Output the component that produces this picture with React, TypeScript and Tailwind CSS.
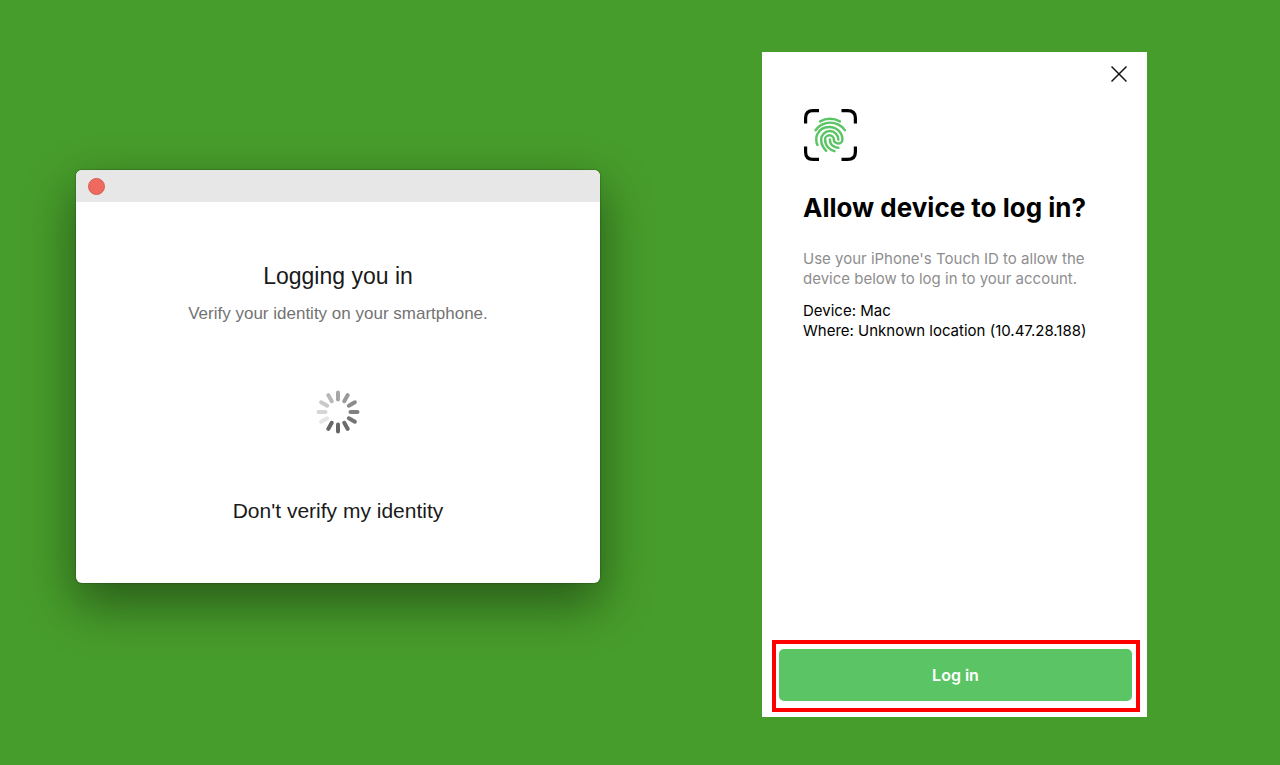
const spokes: { angle: number; color: string }[] = [
  { angle: 0, color: "#a6a6a6" },
  { angle: 30, color: "#999999" },
  { angle: 60, color: "#8c8c8c" },
  { angle: 90, color: "#808080" },
  { angle: 120, color: "#737373" },
  { angle: 150, color: "#6b6b6b" },
  { angle: 180, color: "#666666" },
  { angle: 210, color: "#666666" },
  { angle: 240, color: "#e6e6e6" },
  { angle: 270, color: "#d6d6d6" },
  { angle: 300, color: "#c9c9c9" },
  { angle: 330, color: "#b8b8b8" },
];

const Spinner = () => (
  <svg className="w-11 h-11" viewBox="-22 -22 44 44" role="img" aria-label="Loading">
    {spokes.map((spoke) => (
      <line
        key={spoke.angle}
        x1="0"
        y1="-12.5"
        x2="0"
        y2="-19.5"
        stroke={spoke.color}
        strokeWidth="4"
        strokeLinecap="round"
        transform={`rotate(${spoke.angle})`}
      />
    ))}
  </svg>
);

const TouchIdIcon = () => (
  <svg className="w-[54px] h-[54px]" viewBox="0 0 54 54" fill="none">
    <path
      d="M2.6 15.5V10q0-7.4 7.4-7.4h6M38.5 2.6h6q7.9 0 7.9 7.4v5.5M52.4 38.5v5.5q0 7.4-7.9 7.4h-6M16 51.4h-6q-7.4 0-7.4-7.4v-5.5"
      stroke="#000"
      strokeWidth="3.2"
    />
    <g transform="translate(6.6 6.6) scale(1.7)" stroke="#5bc566" strokeWidth="1.45" strokeLinecap="round">
      <path d="M6.2 4C8 3 9.9 2.5 12 2.5S16 3 17.8 4" />
      <path d="M3.5 9.2C4.5 7.8 5.75 6.7 7.25 5.95c3-1.5 6.8-1.5 9.75 0 1.5.75 2.75 1.8 3.75 3.2" />
      <path d="M4.6 17.9c-.6-1.2-.7-2.6-.7-3.5 0-1.1.2-2 .55-2.7C5.7 9 8.6 7.3 11.6 7.3c4.2 0 7.7 3.3 7.7 7.3 0 1.35-1.1 2.4-2.5 2.4s-2.55-1-2.55-2.4c0-1.3-1.1-2.4-2.55-2.4s-2.6 1.1-2.6 2.4c0 1.9.75 3.6 2 4.9 1.1 1.1 2.1 1.6 3.5 2" />
      <path d="M9.75 21.3c-.87-.87-1.3-1.4-1.95-2.6-.65-1.15-1-2.6-1-4.1 0-2.7 2.3-4.9 5.1-4.9s5 2.2 5 4.9" />
      <path d="M16.9 19.5c-1.1 0-2-.3-2.85-.85-1.35-.9-2.1-2.4-2.1-4.05" />
    </g>
  </svg>
);

const LoginWindow = () => (
  <section className="w-[524px] max-w-full rounded-md bg-white overflow-hidden shadow-[0_0_1px_1px_rgba(0,0,0,0.15),0_20px_50px_2px_rgba(0,0,0,0.42)] font-['Liberation_Sans',sans-serif]">
    <div className="flex items-center h-8 px-3 bg-[#e7e7e7]">
      <button aria-label="Close window" className="w-[17px] h-[17px] rounded-full bg-[#ee6a5f] border border-[#d95c52]" />
    </div>
    <div className="flex flex-col items-center text-center py-14">
      <h2 className="text-[23px] leading-9 text-[#1a1a1a]">Logging you in</h2>
      <p className="mt-1 text-[17px] leading-8 text-[#737373]">Verify your identity on your smartphone.</p>
      <div className="pt-15 pb-[61px]">
        <Spinner />
      </div>
      <button className="text-[21px] leading-8 text-[#1a1a1a]">Don't verify my identity</button>
    </div>
  </section>
);

const PhoneScreen = () => (
  <section className="flex flex-col w-[385px] max-w-full min-h-[665px] bg-white font-[Inter,sans-serif]">
    <div className="flex justify-end px-5 pt-3">
      <button aria-label="Close">
        <svg className="w-4 h-5" viewBox="0 0 16 20" fill="none" stroke="#111" strokeWidth="1.5">
          <path d="M0.5 2.5l15 15M15.5 2.5l-15 15" />
        </svg>
      </button>
    </div>
    <div className="grow px-[41px] pt-6">
      <TouchIdIcon />
      <h1 className="mt-6 text-[26px] leading-11 font-bold text-black whitespace-nowrap">Allow device to log in?</h1>
      <p className="mt-[19px] text-[15px] leading-5 text-[#8e8e8e]">
        Use your iPhone's Touch ID to allow the device below to log in to your account.
      </p>
      <p className="mt-3 text-[15px] leading-5 text-black whitespace-nowrap">
        Device: Mac
        <br />
        Where: Unknown location (10.47.28.188)
      </p>
    </div>
    <div className="mr-[7px] ml-[10px] mb-[5px] pl-[3px] pr-1 pt-[5px] pb-[7px] border-4 border-[#ff0000]">
      <button className="w-full h-[52px] rounded-[5px] bg-[#5bc566] text-base font-semibold text-white">Log in</button>
    </div>
  </section>
);

export default function App() {
  return (
    <main className="flex flex-wrap items-start min-h-screen gap-x-[162px] gap-y-10 px-[76px] pt-[52px] pb-12 bg-[#479d2b]">
      <div className="max-w-full pt-[118px]">
        <LoginWindow />
      </div>
      <PhoneScreen />
    </main>
  );
}
